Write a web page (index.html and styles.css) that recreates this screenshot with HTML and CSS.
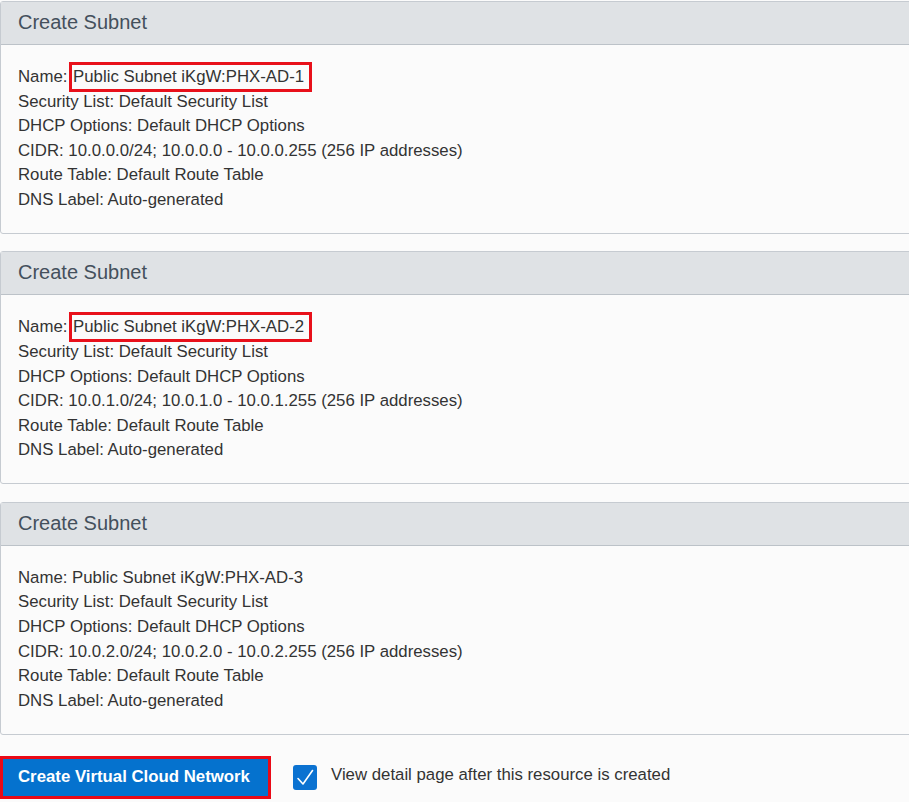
FILE: index.html
```html
<!DOCTYPE html>
<html>
<head>
<meta charset="utf-8">
<link rel="stylesheet" href="styles.css">
</head>
<body>
<div class="page">
  <section class="panel">
    <div class="panel-head">Create Subnet</div>
    <div class="panel-body">
      <div class="line">Name: <span class="hl">Public Subnet iKgW:PHX-AD-1</span></div>
      <div class="line">Security List: Default Security List</div>
      <div class="line">DHCP Options: Default DHCP Options</div>
      <div class="line">CIDR: 10.0.0.0/24; 10.0.0.0 - 10.0.0.255 (256 IP addresses)</div>
      <div class="line">Route Table: Default Route Table</div>
      <div class="line">DNS Label: Auto-generated</div>
    </div>
  </section>
  <section class="panel">
    <div class="panel-head">Create Subnet</div>
    <div class="panel-body">
      <div class="line">Name: <span class="hl">Public Subnet iKgW:PHX-AD-2</span></div>
      <div class="line">Security List: Default Security List</div>
      <div class="line">DHCP Options: Default DHCP Options</div>
      <div class="line">CIDR: 10.0.1.0/24; 10.0.1.0 - 10.0.1.255 (256 IP addresses)</div>
      <div class="line">Route Table: Default Route Table</div>
      <div class="line">DNS Label: Auto-generated</div>
    </div>
  </section>
  <section class="panel">
    <div class="panel-head">Create Subnet</div>
    <div class="panel-body">
      <div class="line">Name: Public Subnet iKgW:PHX-AD-3</div>
      <div class="line">Security List: Default Security List</div>
      <div class="line">DHCP Options: Default DHCP Options</div>
      <div class="line">CIDR: 10.0.2.0/24; 10.0.2.0 - 10.0.2.255 (256 IP addresses)</div>
      <div class="line">Route Table: Default Route Table</div>
      <div class="line">DNS Label: Auto-generated</div>
    </div>
  </section>
  <div class="actions">
    <div class="btn-wrap"><button class="btn">Create Virtual Cloud Network</button></div>
    <label class="check">
      <span class="box"><svg width="24" height="25" viewBox="0 0 24 25"><path d="M5 13.5 L10 19 L19.5 5.5" fill="none" stroke="#fff" stroke-width="1.6" stroke-linecap="round" stroke-linejoin="round"/></svg></span>
      <span class="check-label">View detail page after this resource is created</span>
    </label>
  </div>
</div>
</body>
</html>
```
FILE: styles.css
```css
html, body {
  margin: 0;
  padding: 0;
  background: #fbfbfb;
}
body {
  font-family: "Liberation Sans", Arial, sans-serif;
  color: #333;
  overflow: hidden;
}
.page {
  padding-top: 1px;
  width: 930px;
}
.panel {
  border: 1px solid #c6cbd1;
  border-radius: 3px;
  background: #fbfbfb;
  margin-bottom: 17.3px;
}
.panel-head {
  background: #dfe2e5;
  border-bottom: 1px solid #bcc2c8;
  height: 42px;
  line-height: 40px;
  padding-left: 17px;
  font-size: 20px;
  color: #44505c;
}
.panel-body {
  padding: 20px 17px 20.5px;
  font-size: 16.8px;
  line-height: 24.6px;
}
.line {
  white-space: nowrap;
}
.hl {
  border: 3px solid #e8101a;
  padding: 2px 5px 3px 1px;
  margin-left: -3px;
}
.actions {
  display: flex;
  align-items: center;
  margin-top: 21px;
}
.btn-wrap {
  border: 3px solid #ea0a17;
  width: 265px;
}
.btn {
  display: block;
  width: 100%;
  height: 37px;
  border: 0;
  margin: 0;
  background: #0572ce;
  color: #fff;
  font-family: "Liberation Sans", Arial, sans-serif;
  font-weight: bold;
  font-size: 16.8px;
  text-align: left;
  padding-left: 15px;
}
.check {
  display: flex;
  align-items: center;
  margin-left: 22px;
}
.box {
  width: 24px;
  height: 25px;
  background: #0b72d1;
  border-radius: 3px;
  display: block;
}
.box svg {
  display: block;
}
.check-label {
  margin-left: 14px;
  font-size: 16.8px;
  color: #333;
  margin-top: -4px;
}
```
